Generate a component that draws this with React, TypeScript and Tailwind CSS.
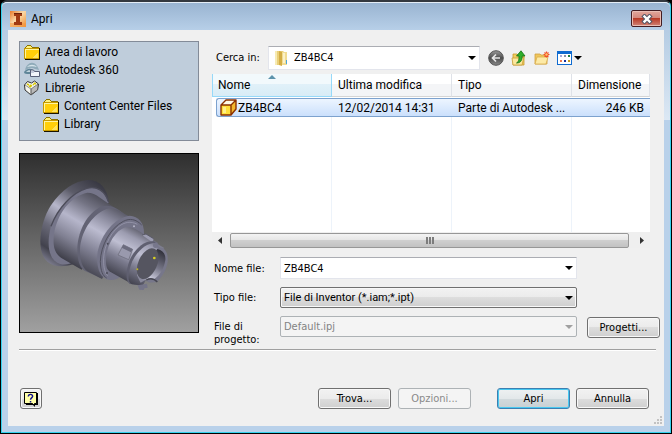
import React from 'react'

// ── Icons ─────────────────────────────────────────────────────────────────────

function InventorIcon() {
  return (
    <svg width="16" height="16" viewBox="0 0 16 16" aria-hidden="true">
      <defs>
        <linearGradient id="inv" x1="0" y1="0" x2="1" y2="1">
          <stop offset="0" stopColor="#e87a2a" />
          <stop offset="0.45" stopColor="#fbd9a8" />
          <stop offset="1" stopColor="#ee8a2c" />
        </linearGradient>
      </defs>
      <rect width="16" height="16" fill="url(#inv)" />
      <path d="M0 12h16v4H0z" fill="#f39a45" opacity=".6" />
      <path d="M4 2h8v3h-2v6h2v3H4v-3h2V5H4z" fill="#a03a12" />
      <path d="M4 2h8v1H4z" fill="#6e2208" />
    </svg>
  )
}

function FolderIcon() {
  return (
    <svg width="16" height="16" viewBox="0 0 16 16" shapeRendering="crispEdges" aria-hidden="true">
      <path d="M1 3h1V2h1V1h4v1h1v1h7v1H1z" fill="#8a7200" />
      <path d="M3 2h4v1h1v1H2V3h1z" fill="#fff27a" />
      <rect x="0" y="4" width="15" height="11" fill="#c79a00" />
      <rect x="1" y="5" width="14" height="9" fill="#ffcf0a" />
      <path d="M1 5h14v1H2v8H1z" fill="#fff6a0" />
      <path d="M14 9v5H8z" fill="#ffe45c" />
      <path d="M15 4h1v12H1v-1h14z" fill="#1a1400" />
    </svg>
  )
}

function CloudIcon() {
  return (
    <svg width="16" height="16" viewBox="0 0 16 16" aria-hidden="true">
      <path d="M1 8c1-5 5-8 8-7 3 0 5 4 6 7l-4-1c-3-2-6-1-10 1z" fill="#8fabb9" />
      <path d="M3 5c3-3 7-3 10 0-3-1-7-1-10 0z" fill="#d5e4ea" />
      <path d="M0 10c3-4 8-4 10-1l-1 3H3c-2 0-3-1-3-2z" fill="#5f8598" />
      <path d="M2 10c2-2 4-2 6-1l-1 1z" fill="#c3d6de" />
      <path d="M6.500 8h3l1 1.500h5v5h-9z" fill="#f4f6fb" stroke="#5a6078" />
      <path d="M7 10h3" stroke="#9aa4c0" />
    </svg>
  )
}

function LibraryIcon() {
  return (
    <svg width="16" height="16" viewBox="0 0 16 16" aria-hidden="true">
      <path d="M.5 5l3-3.500 4 1.500 3-2 4 3-1 6-6.500 5L1 10z" fill="#f4f4ee" stroke="#333" />
      <path d="M7 14.500V9l7-5-.5 6z" fill="#b9b9b9" stroke="#444" strokeWidth=".6" />
      <path d="M1 5l6 4v6" fill="none" stroke="#777" strokeWidth=".8" />
      <path d="M3 4l2 1M6 5l2 1M10 3l2 1M5 6l2 1M9 4l1 1" stroke="#d8c800" strokeWidth="1.500" />
    </svg>
  )
}

function OpenFolderIcon() {
  return (
    <svg width="14" height="16" viewBox="0 0 14 16" aria-hidden="true">
      <path d="M1 1h8l1 1v13H1z" fill="#e9cf78" />
      <path d="M1 1h2v14H1z" fill="#f7ebb4" />
      <path d="M5 1l3 1v14l-3-1z" fill="#d3ad45" />
      <path d="M8 2h5v13H8z" fill="#f1dc93" />
      <path d="M9 3h2v10H9z" fill="#fbf1c8" />
      <path d="M12 10h1v4h-1z" fill="#4aa3dd" />
    </svg>
  )
}

function PartIcon() {
  return (
    <svg width="17" height="17" viewBox="0 0 17 17" aria-hidden="true">
      <path d="M1 6l5-5h10l-5 5z" fill="#fffbe8" />
      <path d="M1 6h10v10H1z" fill="#ffdf3a" />
      <path d="M11 6l5-5v9l-5 6z" fill="#f3b72c" />
      <path d="M1 6l5-5h10v9l-5 6H1zM1 6h10v10M11 6l5-5" fill="none" stroke="#8b3000" strokeWidth="1.400" strokeLinejoin="round" />
      <path d="M3 8h3v6H3z" fill="#fff08a" />
    </svg>
  )
}

function BackIcon() {
  return (
    <svg width="16" height="16" viewBox="0 0 16 16" aria-hidden="true">
      <defs>
        <linearGradient id="back" x1="0" y1="0" x2="0" y2="1">
          <stop offset="0" stopColor="#9a9a9a" />
          <stop offset="0.5" stopColor="#4c4c4c" />
          <stop offset="1" stopColor="#8a8a8a" />
        </linearGradient>
      </defs>
      <circle cx="8" cy="8" r="7.300" fill="url(#back)" stroke="#555" />
      <path d="M12 8H5M8 4.500L4.500 8 8 11.500" fill="none" stroke="#e6e6e6" strokeWidth="1.700" />
    </svg>
  )
}

function UpFolderIcon() {
  return (
    <svg width="16" height="16" viewBox="0 0 16 16" aria-hidden="true">
      <path d="M2 4h4l1 1h6v10H2z" fill="#f0cc60" stroke="#c79a2c" strokeWidth=".8" />
      <path d="M1 8h9l3-1-2 8H2z" fill="#fbe79c" stroke="#c9a03a" strokeWidth=".8" />
      <path d="M5.500 13c2.500-1 2.500-4 2.500-7H5.500L10 .8 14 6h-2.800c0 5-2 7-5.700 7z" fill="#2fae2b" stroke="#157215" strokeWidth=".8" />
    </svg>
  )
}

function NewFolderIcon() {
  return (
    <svg width="16" height="16" viewBox="0 0 16 16" aria-hidden="true">
      <path d="M1 4h5l1 1h6v9H1z" fill="#efc65c" stroke="#d0a040" strokeWidth=".8" />
      <path d="M1 14l2-7h11l-2 7z" fill="#fdeaa6" stroke="#d9ae4c" strokeWidth=".8" />
      <path d="M12.500 1.500v6M9.500 4.500h6M10.500 2.500l4 4M14.500 2.500l-4 4" stroke="#f0502a" strokeWidth="1.200" />
      <circle cx="12.500" cy="4.500" r="1.200" fill="#ffc46a" />
    </svg>
  )
}

function ViewsIcon() {
  return (
    <svg width="16" height="16" viewBox="0 0 16 16" shapeRendering="crispEdges" aria-hidden="true">
      <rect x="0" y="1" width="15" height="14" fill="#0f6bd0" />
      <rect x="1" y="4" width="13" height="10" fill="#fff" />
      <path d="M3 5h2v2H3z" fill="#a8a8d8" />
      <path d="M7 5h2v2H7z" fill="#8890a8" />
      <path d="M11 5h2v2h-2z" fill="#1d7f3c" />
      <path d="M3 10h2v2H3z" fill="#f07850" />
      <path d="M7 10h2v2H7z" fill="#1530a0" />
      <path d="M11 10h2v2h-2z" fill="#c8981c" />
    </svg>
  )
}

function HelpIcon() {
  return (
    <svg width="16" height="16" viewBox="0 0 16 16" aria-hidden="true">
      <path d="M3 2h12v12h-3v2l-2-2H3z" fill="#000" />
      <path d="M1.500 1.500h12v11h-2v2l-2-2h-8z" fill="#ffffa8" stroke="#000" />
      <path d="M5.300 5.500c0-3 4.700-2.700 4.300 0C9.300 6.900 7.500 7 7.500 8.800" fill="none" stroke="#101090" strokeWidth="1.400" />
      <path d="M6.800 10h1.500v1.500H6.800z" fill="#101090" />
    </svg>
  )
}

function Caret({ className = '' }: { className?: string }) {
  return (
    <svg width="8" height="4" viewBox="0 0 8 4" className={className} aria-hidden="true">
      <path d="M0 0h8L4 4z" fill="currentColor" />
    </svg>
  )
}

// ── Part preview ──────────────────────────────────────────────────────────────

function PartPreview() {
  return (
    <svg viewBox="60 27 534 534" className="block w-full" role="img" aria-label="ZB4BC4">
      <defs>
        <linearGradient id="bg" x1="0" y1="0" x2="0" y2="1">
          <stop offset="0" stopColor="#2f2f2f" />
          <stop offset="1" stopColor="#a0a0a0" />
        </linearGradient>
        <linearGradient id="rim" gradientUnits="userSpaceOnUse" x1="320" y1="120" x2="150" y2="370">
          <stop offset="0" stopColor="#34343e" />
          <stop offset="0.25" stopColor="#5c5c69" />
          <stop offset="0.45" stopColor="#b6b6ca" />
          <stop offset="0.65" stopColor="#6a6a79" />
          <stop offset="0.85" stopColor="#42424d" />
          <stop offset="1" stopColor="#8c8ca0" />
        </linearGradient>
        <linearGradient id="cone" gradientUnits="userSpaceOnUse" x1="310" y1="155" x2="195" y2="350">
          <stop offset="0" stopColor="#4a4a55" />
          <stop offset="0.2" stopColor="#737383" />
          <stop offset="0.45" stopColor="#b6b6cb" />
          <stop offset="0.72" stopColor="#808092" />
          <stop offset="1" stopColor="#3a3a44" />
        </linearGradient>
        <linearGradient id="step" gradientUnits="userSpaceOnUse" x1="375" y1="195" x2="265" y2="390">
          <stop offset="0" stopColor="#50505c" />
          <stop offset="0.2" stopColor="#868699" />
          <stop offset="0.42" stopColor="#bcbcd0" />
          <stop offset="0.7" stopColor="#808093" />
          <stop offset="1" stopColor="#42424d" />
        </linearGradient>
        <linearGradient id="neck" gradientUnits="userSpaceOnUse" x1="430" y1="255" x2="350" y2="405">
          <stop offset="0" stopColor="#565662" />
          <stop offset="0.2" stopColor="#9c9cb0" />
          <stop offset="0.4" stopColor="#bfbfd2" />
          <stop offset="0.65" stopColor="#7c7c8f" />
          <stop offset="1" stopColor="#373741" />
        </linearGradient>
        <linearGradient id="cup" gradientUnits="userSpaceOnUse" x1="490" y1="320" x2="440" y2="410">
          <stop offset="0" stopColor="#30303a" />
          <stop offset="0.5" stopColor="#777788" />
          <stop offset="0.85" stopColor="#c7c7d8" />
          <stop offset="1" stopColor="#88889b" />
        </linearGradient>
      </defs>
      <rect x="60" y="27" width="534" height="534" fill="url(#bg)" />

      {/* flange */}
      <path d="M327 172C321 128 298 104 263 105C225 107 184 134 152 182C121 230 106 318 142 350C163 368 192 366 222 357Z" fill="url(#rim)" />
      <path d="M325 172C315 137 290 122 260 130C219 142 174 187 153 244C138 299 146 346 180 357C195 361 210 357 222 352Z" fill="#757589" />
      <path d="M325 170C315 137 290 122 260 130C219 142 174 187 153 244" fill="none" stroke="#4c4c59" strokeWidth="4" />

      {/* stepped cone */}
      <path d="M262 143C212 153 171 206 162 268C158 305 163 327 188 341L245 374L372 208L300 158C287 148 276 143 262 143Z" fill="url(#cone)" />
      <path d="M374 209C350 187 329 178 306 184C262 203 235 256 232 307C232 344 237 366 254 377L300 398Z" fill="#636374" />
      <path d="M374 207C351 192 335 185 318 193C273 212 243 263 240 313C240 346 246 367 262 379L306 402L410 225Z" fill="url(#step)" />

      {/* collar */}
      <path d="M432 270C434 235 417 213 389 212C345 217 304 266 293 320C287 367 299 401 329 405C345 406 354 401 360 396Z" fill="#747488" />
      <path d="M425 240C408 222 389 219 370 229C330 249 302 303 301 350C302 378 308 393 320 399" fill="none" stroke="#50505e" strokeWidth="3" />
      <path d="M412 238C391 227 373 232 357 244C325 269 308 317 311 355C312 374 317 386 323 392" fill="none" stroke="#a0a0b5" strokeWidth="2" />
      <circle cx="402" cy="244" r="3" fill="#b6b6c8" />
      <circle cx="323" cy="296" r="3" fill="#4b4b57" />
      <circle cx="321" cy="384" r="3" fill="#4b4b57" />

      {/* neck */}
      <path d="M376 247C344 258 319 303 318 344C317 367 323 377 333 382L397 418L474 294L420 260C403 249 390 245 376 247Z" fill="url(#neck)" />
      <path d="M426 270L438 267L461 281L457 292Z" fill="#9d9db2" />
      <path d="M426 270L438 267L461 281" fill="none" stroke="#5a5a68" strokeWidth="3" />
      <path d="M370 299L398 313L386 344L354 330Z" fill="#9999ad" stroke="#666675" strokeWidth="2" />
      <path d="M370 299L398 313L393 322L365 308Z" fill="#6c6c7e" />

      {/* open end */}
      <path d="M462 289C435 285 405 309 389 346C377 378 376 405 388 416L416 421L485 306Z" fill="#5f5f70" />
      <path d="M468 294C442 292 413 315 397 349C384 382 381 408 394 417L428 422L492 308Z" fill="url(#neck)" />
      <path d="M470 301L481 307C498 311 505 328 503 351C499 376 486 397 470 411L449 413L437 407C460 390 477 363 480 338Z" fill="#77778a" />
      <path d="M472 312C488 316 498 326 496 346C491 373 479 392 464 401L440 403L422 413C417 405 414 398 411 390Z" fill="url(#cup)" />
      <ellipse cx="443" cy="356" rx="28" ry="49" transform="rotate(24 443 356)" fill="#555560" />
      <path d="M439 405C450 399 463 401 472 411" fill="none" stroke="#454550" strokeWidth="4" />
      <path d="M413 421L441 416L443 428L433 430L431 435L418 434Z" fill="#747488" />
      <circle cx="467" cy="301" r="8" fill="#77778b" />
      <circle cx="463" cy="339" r="4" fill="#d8d020" />
      <circle cx="412" cy="373" r="3" fill="#c0b820" />
    </svg>
  )
}

// ── Shared controls ───────────────────────────────────────────────────────────

const buttonBase = "h-[21px] rounded-[3px] border font-['DejaVu_Sans_Condensed','DejaVu_Sans',sans-serif] text-[11px] leading-4"
const buttonGrey = 'border-[#707070] bg-[linear-gradient(#f2f2f2_0%,#ebebeb_50%,#dddddd_50%,#cfcfcf_100%)] shadow-[inset_0_0_0_1px_#f8f8f8]'

type DialogButtonProps = {
  children: React.ReactNode
  variant?: 'normal' | 'default' | 'disabled'
  className?: string
}

function DialogButton({ children, variant = 'normal', className = '' }: DialogButtonProps) {
  const look = {
    normal: buttonGrey,
    default: 'border-[#3c7fb1] bg-[linear-gradient(#eef1f2_0%,#e3e8ea_50%,#d2dadd_50%,#c8d0d3_100%)] shadow-[inset_0_0_0_1px_#48c8f0]',
    disabled: 'border-[#adb2b5] bg-[#f4f4f4] text-[#8a8a8a]',
  }[variant]
  return (
    <button type="button" disabled={variant === 'disabled'} className={`${buttonBase} ${look} w-[73px] ${className}`}>
      {children}
    </button>
  )
}

const places = [
  { label: 'Area di lavoro', icon: <FolderIcon />, nested: false },
  { label: 'Autodesk 360', icon: <CloudIcon />, nested: false },
  { label: 'Librerie', icon: <LibraryIcon />, nested: false },
  { label: 'Content Center Files', icon: <FolderIcon />, nested: true },
  { label: 'Library', icon: <FolderIcon />, nested: true },
]

function Places() {
  return (
    <ul className="h-[100px] border border-[#838b98] bg-[#bfcddb] pt-px pl-1">
      {places.map(place => (
        <li key={place.label} className={place.nested ? 'pl-[19px]' : ''}>
          <button type="button" className="flex h-[18px] items-center gap-[5px]">
            {place.icon}
            {place.label}
          </button>
        </li>
      ))}
    </ul>
  )
}

// ── File list ─────────────────────────────────────────────────────────────────

function FileList() {
  const head = 'border-r border-b border-[#dfe2e8] border-b-[#d5d5d5] bg-[linear-gradient(#ffffff_45%,#f4f5f7_45%)] px-[6px] text-left font-normal'
  const cell = 'border-y border-[#7da2ce] bg-[linear-gradient(#edf5ff,#cbe0fc)] px-[6px] whitespace-nowrap'
  const empty = 'border-r border-[#edf3fa]'
  return (
    <div className="bg-white">
      <table className="w-full table-fixed border-separate border-spacing-0">
        <colgroup>
          <col className="w-[120px]" />
          <col className="w-[120px]" />
          <col className="w-[120px]" />
          <col />
        </colgroup>
        <thead>
          <tr className="h-[23px]">
            <th className="relative border border-t-0 border-[#96d9f9] bg-[linear-gradient(#f2f9fc_45%,#e1f1f9_45%,#d8ecf6)] px-[5px] text-left font-normal">
              <svg width="8" height="4" viewBox="0 0 8 4" className="absolute top-px left-1/2 -translate-x-1/2" aria-hidden="true">
                <path d="M0 4L4 0l4 4z" fill="#5d93ab" />
              </svg>
              Nome
            </th>
            <th className={head}>Ultima modifica</th>
            <th className={head}>Tipo</th>
            <th className={head}>Dimensione</th>
          </tr>
        </thead>
        <tbody>
          <tr className="h-px"><td colSpan={4} /></tr>
          <tr className="h-[19px]">
            <td className="pl-1">
              <div className="flex h-[19px] items-center gap-px rounded-l-[3px] border border-r-0 border-[#7da2ce] bg-[linear-gradient(#edf5ff,#cbe0fc)] pl-[3px]">
                <PartIcon />
                ZB4BC4
              </div>
            </td>
            <td className={cell}>12/02/2014 14:31</td>
            <td className={cell}>Parte di Autodesk ...</td>
            <td className={`${cell} text-right`}>246 KB</td>
          </tr>
          <tr className="h-[115px]">
            <td className={empty} />
            <td className={empty} />
            <td className={empty} />
            <td />
          </tr>
        </tbody>
      </table>
      <div className="flex h-4 items-center justify-between bg-[#efefef] pr-[6px] pl-[6px] text-[#333]">
        <svg width="4" height="7" viewBox="0 0 4 7" aria-hidden="true"><path d="M4 0v7L0 3.500z" fill="currentColor" /></svg>
        <div className="mr-[11px] ml-2 flex h-[15px] flex-1 items-center justify-center gap-px rounded-[2px] border border-[#979797] bg-[linear-gradient(#f3f3f3_0%,#e5e5e5_50%,#cfcfcf_50%,#c2c2c2_100%)]">
          <span className="h-[7px] w-[2px] bg-[#7c7c7c]" />
          <span className="h-[7px] w-[2px] bg-[#7c7c7c]" />
          <span className="h-[7px] w-[2px] bg-[#7c7c7c]" />
        </div>
        <svg width="4" height="7" viewBox="0 0 4 7" aria-hidden="true"><path d="M0 0v7l4-3.500z" fill="currentColor" /></svg>
      </div>
    </div>
  )
}

// ── Dialog ────────────────────────────────────────────────────────────────────

export default function App() {
  const label = "w-[66px] shrink-0 font-['DejaVu_Sans_Condensed','DejaVu_Sans',sans-serif] text-[11px] leading-[13px]"
  const fieldBase = 'w-full appearance-none border text-[11px] outline-none'
  const field = `${fieldBase} font-['DejaVu_Sans_Condensed','DejaVu_Sans',sans-serif]`
  const caret = 'pointer-events-none absolute top-1/2 right-1 -translate-y-1/2'
  return (
    <div className="flex min-h-screen flex-col bg-black p-px pt-0 font-[Roboto,'Noto_Sans',sans-serif] text-[12px] leading-4 text-black">
      <div className="flex flex-1 flex-col rounded-t-[6px] border border-t-2 border-[#35d2ee] border-t-[#33383f] bg-[linear-gradient(#a9c3de_0px,#dce8f4_118px,#b9d1ea_118px)] px-[6px] pb-[6px]">
        <header className="-mx-[6px] flex h-7 items-center justify-between rounded-t-[5px] border-t border-[#e4edf6] bg-[linear-gradient(#99b4d1,#b7cfe8)] pr-2 pl-2">
          <h1 className="flex items-center gap-[5px] pt-[5px]">
            <InventorIcon />
            Apri
          </h1>
          <button type="button" aria-label="Chiudi" className="mt-1 flex h-[17px] w-[31px] items-center justify-center rounded-[2px] border border-[#431c22] bg-[linear-gradient(#e2a79c_0%,#d4857a_50%,#b93a26_50%,#d08478_100%)] shadow-[inset_0_0_0_1px_#e9bdb4]">
            <svg width="12" height="10" viewBox="0 0 12 10" aria-hidden="true">
              <path d="M3.500 2.500l5 5M8.500 2.500l-5 5" stroke="#535666" strokeWidth="4.400" strokeLinecap="square" />
              <path d="M3.500 2.500l5 5M8.500 2.500l-5 5" stroke="#fff" strokeWidth="2.400" strokeLinecap="square" />
            </svg>
          </button>
        </header>

        <main className="flex flex-1 flex-col bg-[#f0f0f0] pt-[11px]">
          <div className="flex gap-[13px] pr-1 pl-[11px]">
            <aside className="w-[180px] shrink-0">
              <Places />
              <div className="mt-3 border border-black">
                <PartPreview />
              </div>
            </aside>

            <section className="min-w-0 flex-1 pt-[5px]">
              <div className="flex h-6 items-center">
                <label htmlFor="look-in" className="w-[56px] shrink-0 pl-1 font-['DejaVu_Sans_Condensed','DejaVu_Sans',sans-serif] text-[11px] whitespace-nowrap">Cerca in:</label>
                <div className="relative flex-1">
                  <select id="look-in" className={`${field} h-6 border-[#e3e5ec] border-t-[#abadb3] bg-white pl-[25px]`}>
                    <option>ZB4BC4</option>
                  </select>
                  <span className="pointer-events-none absolute top-[4px] left-[6px]"><OpenFolderIcon /></span>
                  <Caret className={caret} />
                </div>
                <div className="flex w-[180px] shrink-0 items-center gap-[7px] pl-2">
                  <button type="button" aria-label="Indietro"><BackIcon /></button>
                  <button type="button" aria-label="Livello superiore"><UpFolderIcon /></button>
                  <button type="button" aria-label="Nuova cartella"><NewFolderIcon /></button>
                  <button type="button" aria-label="Visualizza" className="flex items-center gap-px">
                    <ViewsIcon />
                    <Caret />
                  </button>
                </div>
              </div>

              <div className="mt-1 mr-[10px]">
                <FileList />
              </div>

              <div className="mt-[9px] flex flex-col gap-2 pl-[2px]">
                <div className="flex items-center">
                  <label htmlFor="file-name" className={label}>Nome file:</label>
                  <div className="relative flex-1">
                    <input id="file-name" defaultValue="ZB4BC4" className={`${field} block h-[22px] border-[#e3e5ec] border-t-[#abadb3] bg-white pl-[3px]`} />
                    <Caret className={caret} />
                  </div>
                  <div className="w-[83px] shrink-0" />
                </div>
                <div className="flex items-center">
                  <label htmlFor="file-type" className={label}>Tipo file:</label>
                  <div className="relative flex-1">
                    <select id="file-type" className={`${fieldBase} ${buttonGrey} block h-[21px] rounded-[2px] pl-[3px] font-[Roboto,'Noto_Sans',sans-serif]`}>
                      <option>File di Inventor (*.iam;*.ipt)</option>
                    </select>
                    <Caret className={caret} />
                  </div>
                  <div className="w-[83px] shrink-0" />
                </div>
                <div className="flex h-[27px] items-start">
                  <label htmlFor="project-file" className={`${label} pt-1`}>File di progetto:</label>
                  <div className="relative flex-1 text-[#a0a0a0]">
                    <select id="project-file" disabled className={`${field} block h-[21px] rounded-[2px] border-[#adb2b5] bg-[#f4f4f4] pl-[3px] text-[#838383] opacity-100`}>
                      <option>Default.ipj</option>
                    </select>
                    <Caret className={caret} />
                  </div>
                  <div className="w-[83px] shrink-0 pt-px pl-[10px]">
                    <DialogButton>Progetti...</DialogButton>
                  </div>
                </div>
              </div>
            </section>
          </div>

          <hr className="mt-[6px] mr-2 ml-[11px] border-t border-b border-t-[#a0a0a0] border-b-white" />

          <footer className="mt-[37px] flex items-center pr-[15px] pl-3">
            <button type="button" aria-label="Guida" className={`${buttonBase} ${buttonGrey} flex w-[22px] items-center justify-center`}>
              <HelpIcon />
            </button>
            <div className="flex flex-1 justify-end">
              <DialogButton className="mr-[7px]">Trova...</DialogButton>
              <DialogButton variant="disabled" className="mr-[26px]">Opzioni...</DialogButton>
              <DialogButton variant="default" className="mr-[6px]">Apri</DialogButton>
              <DialogButton>Annulla</DialogButton>
            </div>
          </footer>

          <div className="mt-auto flex justify-end pr-[2px] pb-[2px]">
            <svg width="9" height="9" viewBox="0 0 9 9" shapeRendering="crispEdges" aria-hidden="true">
              <path d="M7 1h2v2H7zM4 4h2v2H4zM7 4h2v2H7zM1 7h2v2H1zM4 7h2v2H4zM7 7h2v2H7z" fill="#c2c2c2" />
            </svg>
          </div>
        </main>
      </div>
    </div>
  )
}
